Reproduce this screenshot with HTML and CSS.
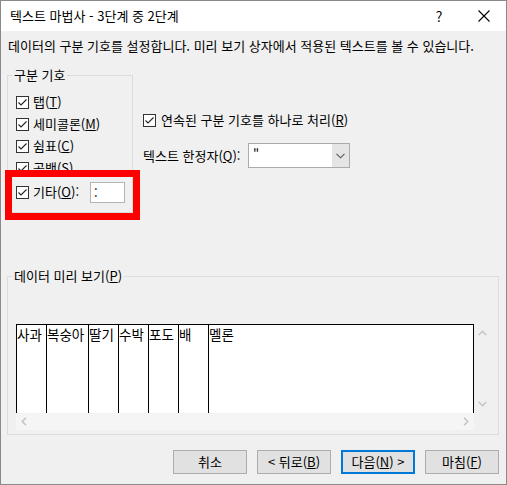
FILE: index.html
```html
<!DOCTYPE html>
<html lang="ko">
<head>
<meta charset="utf-8">
<title>텍스트 마법사</title>
<link rel="stylesheet" href="styles.css">
</head>
<body>
<div class="window">
  <div class="titlebar">
    <span class="title">텍스트 마법사 - 3단계 중 2단계</span>
    <span class="help">?</span>
    <span class="close"><svg width="12" height="12" viewBox="0 0 12 12"><path d="M0.5 0.5 L11.5 11.5 M11.5 0.5 L0.5 11.5" stroke="#000" stroke-width="1.1" fill="none"/></svg></span>
  </div>
  <div class="body">
    <p class="desc">데이터의 구분 기호를 설정합니다. 미리 보기 상자에서 적용된 텍스트를 볼 수 있습니다.</p>
    <div class="top">
      <fieldset class="group delims">
        <legend>구분 기호</legend>
        <div class="row"><svg class="cb" width="13" height="13" viewBox="0 0 13 13"><rect x="0.5" y="0.5" width="12" height="12" fill="#fff" stroke="#333"/><path d="M2.5 6.5 L5 9 L10.5 3.5" fill="none" stroke="#222" stroke-width="1.1"/></svg><span>탭(<u>T</u>)</span></div>
        <div class="row"><svg class="cb" width="13" height="13" viewBox="0 0 13 13"><rect x="0.5" y="0.5" width="12" height="12" fill="#fff" stroke="#333"/><path d="M2.5 6.5 L5 9 L10.5 3.5" fill="none" stroke="#222" stroke-width="1.1"/></svg><span>세미콜론(<u>M</u>)</span></div>
        <div class="row"><svg class="cb" width="13" height="13" viewBox="0 0 13 13"><rect x="0.5" y="0.5" width="12" height="12" fill="#fff" stroke="#333"/><path d="M2.5 6.5 L5 9 L10.5 3.5" fill="none" stroke="#222" stroke-width="1.1"/></svg><span>쉼표(<u>C</u>)</span></div>
        <div class="row"><svg class="cb" width="13" height="13" viewBox="0 0 13 13"><rect x="0.5" y="0.5" width="12" height="12" fill="#fff" stroke="#333"/><path d="M2.5 6.5 L5 9 L10.5 3.5" fill="none" stroke="#222" stroke-width="1.1"/></svg><span>공백(<u>S</u>)</span></div>
        <div class="row other"><svg class="cb" width="13" height="13" viewBox="0 0 13 13"><rect x="0.5" y="0.5" width="12" height="12" fill="#fff" stroke="#333"/><path d="M2.5 6.5 L5 9 L10.5 3.5" fill="none" stroke="#222" stroke-width="1.1"/></svg><span>기타(<u>O</u>):</span><span class="textbox">:</span></div>
      </fieldset>
      <div class="options">
        <div class="row"><svg class="cb" width="13" height="13" viewBox="0 0 13 13"><rect x="0.5" y="0.5" width="12" height="12" fill="#fff" stroke="#333"/><path d="M2.5 6.5 L5 9 L10.5 3.5" fill="none" stroke="#222" stroke-width="1.1"/></svg><span class="opt-label">연속된 구분 기호를 하나로 처리(<u>R</u>)</span></div>
        <div class="qualifier">
          <span class="qlabel">텍스트 한정자(<u>Q</u>):</span>
          <div class="combo">
            <span class="val">"</span>
            <span class="drop"><svg width="9" height="6" viewBox="0 0 9 6"><path d="M0.5 0.8 L4.5 4.8 L8.5 0.8" fill="none" stroke="#555" stroke-width="1.1"/></svg></span>
          </div>
        </div>
      </div>
    </div>
    <fieldset class="group preview">
      <legend>데이터 미리 보기(<u>P</u>)</legend>
      <div class="scroll">
        <div class="table">
          <div class="cell">사과</div>
          <div class="cell">복숭아</div>
          <div class="cell">딸기</div>
          <div class="cell">수박</div>
          <div class="cell">포도</div>
          <div class="cell">배</div>
          <div class="cell last">멜론</div>
        </div>
        <div class="vscroll">
          <svg width="9" height="6" viewBox="0 0 9 6"><path d="M0.8 5 L4.5 1.3 L8.2 5" fill="none" stroke="#c3c3c3" stroke-width="1.5"/></svg>
          <svg width="9" height="6" viewBox="0 0 9 6"><path d="M0.8 1 L4.5 4.7 L8.2 1" fill="none" stroke="#c3c3c3" stroke-width="1.5"/></svg>
        </div>
        <div class="hscroll">
          <svg width="6" height="9" viewBox="0 0 6 9"><path d="M5 0.8 L1.3 4.5 L5 8.2" fill="none" stroke="#c3c3c3" stroke-width="1.5"/></svg>
          <svg width="6" height="9" viewBox="0 0 6 9"><path d="M1 0.8 L4.7 4.5 L1 8.2" fill="none" stroke="#c3c3c3" stroke-width="1.5"/></svg>
        </div>
        <div class="corner"></div>
      </div>
    </fieldset>
    <div class="buttons">
      <div class="btn">취소</div>
      <div class="btn">&lt; 뒤로(<u>B</u>)</div>
      <div class="btn default">다음(<u>N</u>) &gt;</div>
      <div class="btn">마침(<u>F</u>)</div>
    </div>
  </div>
  <div class="highlight"></div>
</div>
</body>
</html>
```

FILE: styles.css
```css
* { box-sizing: border-box; }
html, body { margin: 0; padding: 0; }
body {
  font-family: "Noto Sans CJK KR", "Noto Sans", sans-serif;
  font-size: 13px;
  color: #000;
  background: #f0f0f0;
}
u { text-underline-offset: 1px; }

.window {
  position: relative;
  width: 507px;
  height: 485px;
  border: 1px solid #8a8a8a;
  background: #f0f0f0;
  display: flex;
  flex-direction: column;
  overflow: hidden;
}

.titlebar {
  height: 30px;
  flex: none;
  background: #fff;
  display: flex;
  align-items: center;
  padding: 0 11px 0 9px;
}
.title { flex: 1; line-height: 16px; }
.help {
  width: 20px;
  text-align: center;
  font-size: 14px;
  line-height: 16px;
  margin-right: 24px;
}
.close {
  width: 22px;
  height: 16px;
  display: flex;
  align-items: center;
  justify-content: center;
}

.body {
  flex: 1;
  padding: 7px 7px 0 6px;
}

.desc {
  margin: 0;
  padding-left: 1px;
  line-height: 16px;
  height: 16px;
  white-space: nowrap;
}

.top {
  display: flex;
  align-items: flex-start;
  margin-top: 13px;
}

.group {
  margin: 0;
  border: 1px solid #dcdcdc;
  min-width: 0;
}
.group legend {
  padding: 0 2px;
  margin-left: -4px;
  line-height: 16px;
}

.group.delims {
  width: 126px;
  height: 146px;
  padding: 8px 0 0 8px;
}

.row {
  display: flex;
  align-items: center;
  height: 22px;
  gap: 4px;
  line-height: 16px;
  white-space: nowrap;
}
.cb { flex: none; display: block; }
.row.other { height: 26px; }
.textbox {
  width: 35px;
  height: 21px;
  margin-left: auto;
  margin-right: 7px;
  background: #fff;
  border: 1px solid #b4b4b4;
  padding-left: 3px;
  line-height: 19px;
}

.options {
  margin-left: 10px;
  padding-top: 42px;
}
.opt-label { margin-left: 1px; }

.qualifier {
  display: flex;
  align-items: center;
  margin-top: 12px;
  height: 25px;
}
.qlabel {
  width: 105px;
  line-height: 16px;
  white-space: nowrap;
}
.combo {
  width: 102px;
  height: 25px;
  background: #fff;
  border: 1px solid #ababab;
  display: flex;
  align-items: stretch;
}
.combo .val {
  flex: 1;
  padding-left: 4px;
  line-height: 21px;
}
.combo .drop {
  width: 17px;
  background: #e5e5e5;
  display: flex;
  align-items: center;
  justify-content: center;
}

.group.preview {
  margin-top: 55px;
  width: 492px;
  height: 167px;
  padding: 40px 0 0 8px;
}

.scroll {
  display: grid;
  grid-template-columns: 458px 16px;
  grid-template-rows: 89px 17px;
  width: 474px;
}
.table {
  background: #fff;
  border: 1px solid #000;
  border-bottom: none;
  display: grid;
  grid-template-columns: 30px 42px 30px 30px 30px 30px 1fr;
}
.cell {
  border-right: 1px solid #000;
  padding-top: 1px;
  line-height: 17px;
  font-size: 13.5px;
  white-space: nowrap;
  overflow: hidden;
}
.cell.last { border-right: none; }

.vscroll {
  background: #f0f0f0;
  display: flex;
  flex-direction: column;
  justify-content: space-between;
  align-items: center;
  padding: 6px 0 6px 1px;
}
.vscroll svg, .hscroll svg { display: block; }
.hscroll {
  background: #f5f5f5;
  display: flex;
  justify-content: space-between;
  align-items: center;
  padding: 0 5px;
}
.corner { background: #f0f0f0; }

.buttons {
  display: flex;
  justify-content: flex-end;
  gap: 10px;
  margin-top: 15px;
}
.btn {
  width: 74px;
  height: 24px;
  background: #e1e1e1;
  border: 1px solid #adadad;
  display: flex;
  align-items: center;
  justify-content: center;
  line-height: 16px;
  white-space: nowrap;
}
.btn.default { border: 2px solid #0078d7; }

.highlight {
  position: absolute;
  left: 4px;
  top: 169px;
  width: 135px;
  height: 50px;
  border: 7px solid #ff0000;
}
```
